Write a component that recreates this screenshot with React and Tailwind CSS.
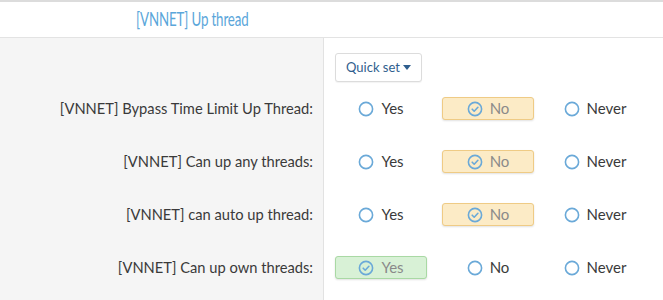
const rows = [
  { label: "[VNNET] Bypass Time Limit Up Thread:", value: "no" },
  { label: "[VNNET] Can up any threads:", value: "no" },
  { label: "[VNNET] can auto up thread:", value: "no" },
  { label: "[VNNET] Can up own threads:", value: "yes" },
];

const options = [
  { key: "yes", text: "Yes", on: "bg-[#d8f1d6] border-[#a9d9a4]" },
  { key: "no", text: "No", on: "bg-[#fcebc6] border-[#efcb85]" },
  { key: "never", text: "Never", on: "bg-[#fcebc6] border-[#efcb85]" },
];

function RadioMark({ checked }) {
  return (
    <svg className="w-[16px] h-[16px] flex-shrink-0" viewBox="0 0 16 16" fill="none">
      <circle cx="8" cy="8" r="6.6" stroke="#6aa9d8" strokeWidth="1.6" fill={checked ? "none" : "#fff"} />
      {checked && (
        <path d="M5.2 8.2l2 2 3.7-3.9" stroke="#6aa9d8" strokeWidth="1.6" strokeLinecap="round" strokeLinejoin="round" />
      )}
    </svg>
  );
}

export default function App() {
  return (
    <div className="w-[663px] h-[300px] overflow-hidden bg-white font-['Lato','Noto_Sans',sans-serif] border-t-2 border-[#dcdcdc]">
      <div className="h-[36px] flex items-center pl-[136px] border-b border-[#e3e3e3]">
        <span className="inline-block origin-left scale-x-[0.72] text-[18.5px] text-[#5aa6da] tracking-[-0.2px] whitespace-nowrap">
          [VNNET] Up thread
        </span>
      </div>
      <div className="flex h-full">
        <div className="w-[324px] bg-[#f5f5f5] border-r border-[#e2e2e2] pt-[61px] pr-[10px] flex flex-col items-end gap-[34px]">
          {rows.map((r) => (
            <div key={r.label} className="h-[19px] flex items-center text-[14.7px] text-[#3a3a3a]">
              {r.label}
            </div>
          ))}
        </div>
        <div className="flex-1 pl-[11px] pt-[15px]">
          <button className="h-[29px] px-[10px] flex items-center gap-[3px] border border-[#dcdcdc] rounded-[3px] bg-white text-[13px] text-[#2f5e8e] shadow-[0_1px_1px_rgba(0,0,0,0.05)]">
            Quick set
            <svg width="8" height="5" viewBox="0 0 8 5"><path d="M0 0h8L4 5z" fill="#2f5e8e" /></svg>
          </button>
          <div className="flex flex-col gap-[30px] mt-[15px]">
            {rows.map((r) => (
              <div key={r.label} className="flex gap-[15px]">
                {options.map((o) => {
                  const checked = r.value === o.key;
                  return (
                    <div
                      key={o.key}
                      className={
                        checked
                          ? `w-[92px] h-[23px] flex items-center justify-center gap-[7px] border rounded-[3px] shadow-[0_1px_2px_rgba(0,0,0,0.12)] ${o.on}`
                          : "w-[92px] h-[23px] flex items-center justify-center gap-[7px] border border-transparent"
                      }
                    >
                      <RadioMark checked={checked} />
                      <span className={checked ? "text-[15px] text-[#8a8a8a]" : "text-[15px] text-[#3a3a3a]"}>{o.text}</span>
                    </div>
                  );
                })}
              </div>
            ))}
          </div>
        </div>
      </div>
    </div>
  );
}
